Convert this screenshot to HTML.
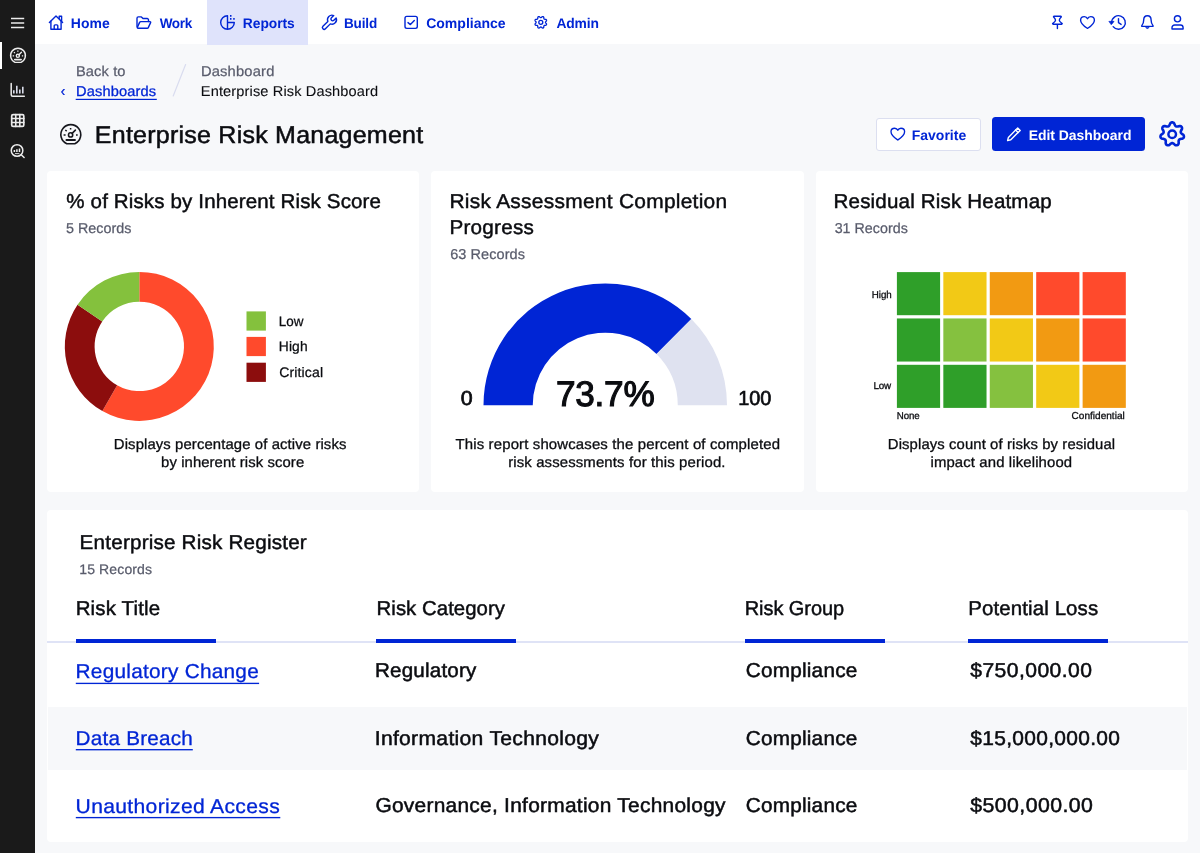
<!DOCTYPE html>
<html lang="en"><head><meta charset="utf-8"><title>Enterprise Risk Management</title>
<style>
html,body{margin:0;padding:0}
body{width:1200px;height:853px;overflow:hidden;position:relative;background:#f7f8fa;font-family:"Liberation Sans", sans-serif}
.b{position:absolute}
svg{position:absolute;overflow:visible}
</style></head><body>
<div class="b" style="left:0;top:0;width:35px;height:853px;background:#1a1a1a"></div>
<div class="b" style="left:0;top:42px;width:2px;height:27px;background:#fff"></div>
<div class="b" style="left:35px;top:0;width:1165px;height:44.3px;background:#fff"></div>
<div class="b" style="left:207px;top:0;width:101px;height:44.5px;background:#dfe3fb"></div>
<div class="b" style="left:47px;top:170.5px;width:372.4px;height:321.3px;background:#fff;border-radius:4px"></div>
<div class="b" style="left:431.2px;top:170.5px;width:372.4px;height:321.3px;background:#fff;border-radius:4px"></div>
<div class="b" style="left:815.6px;top:170.5px;width:372.4px;height:321.3px;background:#fff;border-radius:4px"></div>
<div class="b" style="left:47px;top:510.3px;width:1141.2px;height:331.7px;background:#fff;border-radius:4px"></div>
<div class="b" style="left:47.5px;top:706.6px;width:1139.5px;height:63px;background:#f7f8fa"></div>
<div class="b" style="left:47px;top:640.8px;width:1141px;height:2px;background:#dfe3f6"></div>
<div class="b" style="left:76.2px;top:638.5px;width:140px;height:4.7px;background:#0025d5"></div>
<div class="b" style="left:376.2px;top:638.5px;width:140px;height:4.7px;background:#0025d5"></div>
<div class="b" style="left:744.8px;top:638.5px;width:140px;height:4.7px;background:#0025d5"></div>
<div class="b" style="left:968.4px;top:638.5px;width:140px;height:4.7px;background:#0025d5"></div>
<div class="b" style="left:875.6px;top:117.6px;width:105.6px;height:33px;box-sizing:border-box;background:#fff;border:1px solid #dcdff0;border-radius:3px"></div>
<div class="b" style="left:991.8px;top:117.4px;width:153.6px;height:33.6px;background:#0025d5;border-radius:3.5px"></div>
<svg width="1200" height="853" viewBox="0 0 1200 853" style="left:0;top:0" fill="none" stroke-linecap="round" stroke-linejoin="round">
<path d="M185.6,64.5 L173.2,96" stroke="#d9dcef" stroke-width="1.2"/>
<g stroke="#ececec" stroke-width="1.5">
<path d="M11,18.6H24.2M11,23H24.2M11,27.4H24.2" stroke-linecap="butt"/>
</g>
<g stroke="#ececec" stroke-width="1.4"><path d="M15.01,62.37 A7.4,7.4 0 1 1 20.99,62.37Z"/><circle cx="17.85" cy="55.82" r="1.56"/><path d="M18.97,54.71 L21.42,52.25"/><path d="M14.73,59.62 H21.12" stroke-width="1.61"/><path d="M17.85,50.62 V51.73 M13.91,52.18 L14.95,53.00 M12.65,55.82 H14.13 M21.87,55.82 H23.13" stroke-width="1.33" stroke-linecap="butt"/></g>
<g stroke="#ececec" stroke-width="1.5">
<path d="M11.2,83.6V94.8a1.5,1.5 0 0 0 1.5,1.5H24.3"/>
<path d="M13.8,93.6V90.2M16.8,93.6V85.8M19.8,93.6V89.4M22.8,93.6V86.8" stroke-width="1.6" stroke-linecap="butt" stroke="#d9dcea"/>
<rect x="11.7" y="114.6" width="12.1" height="11.8" rx="1.4" stroke-width="1.7"/>
<path d="M15.75,114.6V126.4M19.8,114.6V126.4M11.7,118.5H23.8M11.7,122.5H23.8" stroke-width="1.6"/>
<circle cx="17.05" cy="150.5" r="5.8"/>
<path d="M21.2,154.7L24.1,157.5"/>
<path d="M14.4,152V150M16.9,152V149.3M19.5,152V148.5" stroke-width="1.5" stroke-linecap="butt"/>
<path d="M15,153.6H19.4" stroke-width="0.9" stroke-linecap="butt"/>
</g>
<g stroke="#0025d5" stroke-width="1.4">
<path d="M49.4,22.4 L56,16 L62.6,22.4"/>
<path d="M50.9,21.2V29.3H61.1V21.2"/>
<path d="M54.2,29.3V25.8a.9,.9 0 0 1 .9,-.9h1.8a.9,.9 0 0 1 .9,.9V29.3"/>
<path d="M59.2,18.6V16.2H61.6V21"/>
<path d="M137,26.6V18.2a1.3,1.3 0 0 1 1.3,-1.3h3.1l1.6,1.6h4.2a1.3,1.3 0 0 1 1.3,1.3V21.6"/>
<path d="M137.2,27.6l2.4,-5.2a1.3,1.3 0 0 1 1.2,-.8h9.2a.7,.7 0 0 1 .6,1l-2.2,4.8a1.3,1.3 0 0 1 -1.2,.8h-9.3a.8,.8 0 0 1 -.7,-.6z"/>
<path d="M227.5,15.7A6.8,6.8 0 1 0 234.3,22.5H227.5M227.5,15.7V29.3"/>
<path d="M230,15.1h1.5v1.6h-1.5zM230,18.1h1.5v1.6h-1.5zM233.2,18.1h1.5v1.6h-1.5z" fill="#0025d5" stroke="none"/>
<path d="M333.74,15.55 L331.43,17.86 A1.7,1.7 0 0 0 333.84,20.27 L336.15,17.96 A4.5,4.5 0 0 1 330.31,23.87 L325.41,28.77 A1.75,1.75 0 0 1 322.93,26.29 L327.83,21.39 A4.5,4.5 0 0 1 333.74,15.55Z"/>
<rect x="405" y="16.4" width="12.3" height="12" rx="1.8"/>
<path d="M408,22.6l2.4,2l3.9,-4.100"/>
<path d="M543.15,16.62 L543.39,16.76 L543.59,16.98 L543.74,17.25 L543.82,17.60 L543.80,18.07 L543.85,18.39 L543.92,18.65 L544.02,18.85 L544.16,19.01 L544.35,19.13 L544.58,19.22 L544.86,19.28 L545.24,19.30 L545.68,19.31 L545.99,19.43 L546.24,19.60 L546.42,19.82 L546.53,20.08 L546.55,20.36 L546.50,20.66 L546.37,20.96 L546.06,21.28 L545.81,21.56 L545.65,21.81 L545.55,22.03 L545.50,22.25 L545.52,22.46 L545.59,22.68 L545.72,22.91 L545.92,23.17 L546.26,23.48 L546.45,23.79 L546.54,24.09 L546.55,24.38 L546.48,24.65 L546.34,24.89 L546.12,25.09 L545.85,25.24 L545.50,25.32 L545.03,25.30 L544.71,25.35 L544.45,25.42 L544.25,25.52 L544.09,25.66 L543.97,25.85 L543.88,26.08 L543.82,26.36 L543.80,26.74 L543.79,27.18 L543.67,27.49 L543.50,27.74 L543.28,27.92 L543.02,28.03 L542.74,28.05 L542.44,28.00 L542.14,27.87 L541.82,27.56 L541.54,27.31 L541.29,27.15 L541.07,27.05 L540.85,27.00 L540.64,27.02 L540.42,27.09 L540.19,27.22 L539.93,27.42 L539.62,27.76 L539.31,27.95 L539.01,28.04 L538.72,28.05 L538.45,27.98 L538.21,27.84 L538.01,27.62 L537.86,27.35 L537.78,27.00 L537.80,26.53 L537.75,26.21 L537.68,25.95 L537.58,25.75 L537.44,25.59 L537.25,25.47 L537.02,25.38 L536.74,25.32 L536.36,25.30 L535.92,25.29 L535.61,25.17 L535.36,25.00 L535.18,24.78 L535.07,24.52 L535.05,24.24 L535.10,23.94 L535.23,23.64 L535.54,23.32 L535.79,23.04 L535.95,22.79 L536.05,22.57 L536.10,22.35 L536.08,22.14 L536.01,21.92 L535.88,21.69 L535.68,21.43 L535.34,21.12 L535.15,20.81 L535.06,20.51 L535.05,20.22 L535.12,19.95 L535.26,19.71 L535.48,19.51 L535.75,19.36 L536.10,19.28 L536.57,19.30 L536.89,19.25 L537.15,19.18 L537.35,19.08 L537.51,18.94 L537.63,18.75 L537.72,18.52 L537.78,18.24 L537.80,17.86 L537.81,17.42 L537.93,17.11 L538.10,16.86 L538.32,16.68 L538.58,16.57 L538.86,16.55 L539.16,16.60 L539.46,16.73 L539.78,17.04 L540.06,17.29 L540.31,17.45 L540.53,17.55 L540.75,17.60 L540.96,17.58 L541.18,17.51 L541.41,17.38 L541.67,17.18 L541.98,16.84 L542.29,16.65 L542.59,16.56 L542.88,16.55Z" stroke-width="1.3"/>
<circle cx="540.8" cy="22.3" r="2.0" stroke-width="1.3"/>
<path d="M1054,16.3H1060.8a.5,.5 0 0 1 .4,.8C1059.7,18.5 1059.3,19.3 1059.3,20.2C1059.3,21.500 1060.5,22.200 1062,23.300a.5,.5 0 0 1 -.3,.9H1053.1a.5,.5 0 0 1 -.3,-.9C1054.300,22.200 1055.500,21.500 1055.500,20.200C1055.500,19.300 1055.100,18.500 1053.600,17.100a.5,.5 0 0 1 .4,-.8ZM1057.4,24.200V28.600"/>
<path d="M1087.50,28.40 C1085.02,26.75 1080.60,23.92 1080.60,20.14 C1080.60,17.78 1082.26,16.60 1084.33,16.60 C1085.84,16.60 1086.95,17.43 1087.50,18.72 C1088.05,17.43 1089.16,16.60 1090.67,16.60 C1092.74,16.60 1094.40,17.78 1094.40,20.14 C1094.40,23.92 1089.98,26.75 1087.50,28.40Z"/>
<path d="M1111.71,22.14 A6.8,6.8 0 1 1 1113.14,26.69"/>
<path d="M1109.3,21.4H1114L1111.5,24.4Z" fill="#0025d5" stroke-width="0.8"/>
<path d="M1118.5,18.6V22.7L1121.1,24.4"/>
<path d="M1147.4,15.800c-2.300,0 -3.700,1.700 -3.700,4.200c0,3.200 -1,4.600 -1.900,5.600c-.3,.4 -.1,.8 .4,.8H1152.600c.5,0 .7,-.4 .4,-.8c-.9,-1 -1.900,-2.400 -1.900,-5.600c0,-2.500 -1.400,-4.200 -3.700,-4.200Z"/>
<path d="M1145.900,27.500a1.600,1.600 0 0 0 3,0Z" fill="#0025d5" stroke-width="0.8"/>
<circle cx="1177.5" cy="18.800" r="3.100"/>
<path d="M1172,29V27.700a2.700,2.700 0 0 1 2.700,-2.700h5.700a2.700,2.700 0 0 1 2.700,2.700V29Z"/>
</g>
<g stroke="#16171d" stroke-width="1.6"><path d="M66.78,143.70 A9.95,9.95 0 1 1 74.82,143.70Z"/><circle cx="70.60" cy="134.90" r="2.10"/><path d="M72.10,133.40 L75.40,130.10"/><path d="M66.40,140.00 H75.00" stroke-width="1.84"/><path d="M70.60,127.90 V129.40 M65.30,130.00 L66.70,131.10 M63.60,134.90 H65.60 M76.00,134.90 H77.70" stroke-width="1.52" stroke-linecap="butt"/></g>
<path d="M897.80,140.00 C895.35,138.35 891.00,135.52 891.00,131.74 C891.00,129.38 892.63,128.20 894.67,128.20 C896.17,128.20 897.26,129.03 897.80,130.32 C898.34,129.03 899.43,128.20 900.93,128.20 C902.97,128.20 904.60,129.38 904.60,131.74 C904.60,135.52 900.25,138.35 897.80,140.00Z" stroke="#0025d5" stroke-width="1.35"/>
<g stroke="#fff" stroke-width="1.4"><path d="M1017.7,127.9l2.500,2.500l-9.400,9.400l-3.200,.8l.8,-3.200z"/><path d="M1015.600,130l2.500,2.500"/></g>
<path d="M1172.20,122.30 L1172.74,122.37 L1173.25,122.58 L1173.74,122.93 L1174.18,123.41 L1174.51,124.16 L1174.79,124.91 L1175.08,125.43 L1175.37,125.84 L1175.68,126.15 L1176.02,126.37 L1176.40,126.50 L1176.83,126.54 L1177.34,126.52 L1177.92,126.42 L1178.68,126.17 L1179.48,125.97 L1180.13,126.01 L1180.70,126.17 L1181.19,126.44 L1181.58,126.82 L1181.86,127.28 L1182.02,127.82 L1182.05,128.41 L1181.94,129.06 L1181.57,129.79 L1181.15,130.47 L1180.93,131.02 L1180.79,131.51 L1180.74,131.94 L1180.78,132.34 L1180.92,132.72 L1181.15,133.09 L1181.49,133.46 L1181.93,133.86 L1182.60,134.30 L1183.25,134.80 L1183.63,135.33 L1183.86,135.88 L1183.95,136.43 L1183.90,136.97 L1183.71,137.48 L1183.39,137.94 L1182.94,138.33 L1182.37,138.65 L1181.57,138.81 L1180.77,138.91 L1180.21,139.08 L1179.74,139.28 L1179.37,139.51 L1179.08,139.79 L1178.87,140.13 L1178.73,140.54 L1178.64,141.04 L1178.61,141.63 L1178.68,142.43 L1178.70,143.25 L1178.52,143.88 L1178.23,144.40 L1177.86,144.82 L1177.41,145.11 L1176.89,145.28 L1176.33,145.31 L1175.75,145.21 L1175.14,144.96 L1174.51,144.44 L1173.94,143.88 L1173.45,143.54 L1173.01,143.30 L1172.60,143.15 L1172.20,143.10 L1171.80,143.15 L1171.39,143.30 L1170.95,143.54 L1170.46,143.88 L1169.89,144.44 L1169.26,144.96 L1168.65,145.21 L1168.07,145.31 L1167.51,145.28 L1166.99,145.11 L1166.54,144.82 L1166.17,144.40 L1165.88,143.88 L1165.70,143.25 L1165.72,142.43 L1165.79,141.63 L1165.76,141.04 L1165.67,140.54 L1165.53,140.13 L1165.32,139.79 L1165.03,139.51 L1164.66,139.28 L1164.19,139.08 L1163.63,138.91 L1162.83,138.81 L1162.03,138.65 L1161.46,138.33 L1161.01,137.94 L1160.69,137.48 L1160.50,136.97 L1160.45,136.43 L1160.54,135.88 L1160.77,135.33 L1161.15,134.80 L1161.80,134.30 L1162.47,133.86 L1162.91,133.46 L1163.25,133.09 L1163.48,132.72 L1163.62,132.34 L1163.66,131.94 L1163.61,131.51 L1163.47,131.02 L1163.25,130.47 L1162.83,129.79 L1162.46,129.06 L1162.35,128.41 L1162.38,127.82 L1162.54,127.28 L1162.82,126.82 L1163.21,126.44 L1163.70,126.17 L1164.27,126.01 L1164.92,125.97 L1165.72,126.17 L1166.48,126.42 L1167.06,126.52 L1167.57,126.54 L1168.00,126.50 L1168.38,126.37 L1168.72,126.15 L1169.03,125.84 L1169.32,125.43 L1169.61,124.91 L1169.89,124.16 L1170.22,123.41 L1170.66,122.93 L1171.15,122.58 L1171.66,122.37Z" stroke="#0025d5" stroke-width="2.6"/>
<circle cx="1172.2" cy="134.3" r="3.8" stroke="#0025d5" stroke-width="2.5"/>
<path d="M139.30,271.90 A74.5,74.5 0 1 1 102.39,411.11 L117.15,385.23 A44.7,44.7 0 1 0 139.30,301.70Z" fill="#ff4a2c" stroke="none"/>
<path d="M102.39,411.11 A74.5,74.5 0 0 1 77.54,304.74 L102.24,321.40 A44.7,44.7 0 0 0 117.15,385.23Z" fill="#8c0d0d" stroke="none"/>
<path d="M77.54,304.74 A74.5,74.5 0 0 1 139.30,271.90 L139.30,301.70 A44.7,44.7 0 0 0 102.24,321.40Z" fill="#84c13d" stroke="none"/>
<rect x="246.5" y="311.4" width="19.4" height="19.2" fill="#84c13d" stroke="none"/>
<rect x="246.5" y="336.9" width="19.4" height="19.2" fill="#ff4a2c" stroke="none"/>
<rect x="246.5" y="362.7" width="19.4" height="19.2" fill="#8c0d0d" stroke="none"/>
<path d="M483.50,405.20 A121.75,121.75 0 0 1 691.34,319.11 L656.52,353.93 A72.5,72.5 0 0 0 532.75,405.20Z" fill="#0025d5" stroke="none"/>
<path d="M691.34,319.11 A121.75,121.75 0 0 1 727.00,405.20 L677.75,405.20 A72.5,72.5 0 0 0 656.52,353.93Z" fill="#dfe2f0" stroke="none"/>
<rect x="896.90" y="272.10" width="43.2" height="43.1" fill="#2f9f29" stroke="none"/>
<rect x="943.33" y="272.10" width="43.2" height="43.1" fill="#f2c916" stroke="none"/>
<rect x="989.76" y="272.10" width="43.2" height="43.1" fill="#f29a12" stroke="none"/>
<rect x="1036.19" y="272.10" width="43.2" height="43.1" fill="#ff4a2c" stroke="none"/>
<rect x="1082.62" y="272.10" width="43.2" height="43.1" fill="#ff4a2c" stroke="none"/>
<rect x="896.90" y="318.45" width="43.2" height="43.1" fill="#2f9f29" stroke="none"/>
<rect x="943.33" y="318.45" width="43.2" height="43.1" fill="#85c13f" stroke="none"/>
<rect x="989.76" y="318.45" width="43.2" height="43.1" fill="#f2c916" stroke="none"/>
<rect x="1036.19" y="318.45" width="43.2" height="43.1" fill="#f29a12" stroke="none"/>
<rect x="1082.62" y="318.45" width="43.2" height="43.1" fill="#ff4a2c" stroke="none"/>
<rect x="896.90" y="364.80" width="43.2" height="43.1" fill="#2f9f29" stroke="none"/>
<rect x="943.33" y="364.80" width="43.2" height="43.1" fill="#2f9f29" stroke="none"/>
<rect x="989.76" y="364.80" width="43.2" height="43.1" fill="#85c13f" stroke="none"/>
<rect x="1036.19" y="364.80" width="43.2" height="43.1" fill="#f2c916" stroke="none"/>
<rect x="1082.62" y="364.80" width="43.2" height="43.1" fill="#f29a12" stroke="none"/>
</svg>
<div id="txt" style="position:absolute;left:0;top:0;width:1200px;height:853px;will-change:transform">
<svg width="1200" height="853" viewBox="0 0 1200 853" style="position:absolute;left:0;top:0;font-family:'Liberation Sans',sans-serif;white-space:pre" text-rendering="geometricPrecision">
<text transform="translate(70.83,28.00) scale(0.9965,1)" font-size="14" fill="#0025d5" font-weight="700" letter-spacing="0.080">Hom<tspan letter-spacing="0">e</tspan></text>
<text transform="translate(159.63,28.00) scale(0.9673,1)" font-size="14" fill="#0025d5" font-weight="700" letter-spacing="-0.312">Wor<tspan letter-spacing="0">k</tspan></text>
<text transform="translate(242.85,28.00) scale(0.9863,1)" font-size="14" fill="#0025d5" font-weight="700" letter-spacing="-0.051">Report<tspan letter-spacing="0">s</tspan></text>
<text transform="translate(343.88,28.00) scale(0.9669,1)" font-size="14" fill="#0025d5" font-weight="700" letter-spacing="-0.133">Buil<tspan letter-spacing="0">d</tspan></text>
<text transform="translate(426.17,28.00) scale(1.0021,1)" font-size="14" fill="#0025d5" font-weight="700" letter-spacing="-0.007">Complianc<tspan letter-spacing="0">e</tspan></text>
<text transform="translate(556.40,28.00) scale(0.9881,1)" font-size="14" fill="#0025d5" font-weight="700" letter-spacing="-0.140">Admi<tspan letter-spacing="0">n</tspan></text>
<text transform="translate(75.91,76.00) scale(1.0320,1)" font-size="14.2" fill="#595c6c" letter-spacing="0.118" stroke="#595c6c" stroke-width="0.25">Back t<tspan letter-spacing="0">o</tspan></text>
<rect x="75.70" y="98.80" width="81.10" height="1.2" fill="#0025d5"/>
<text transform="translate(76.04,96.00) scale(1.0281,1)" font-size="14.2" fill="#0025d5" letter-spacing="0.146" stroke="#0025d5" stroke-width="0.3">Dashboard<tspan letter-spacing="0">s</tspan></text>
<text transform="translate(60.86,96.00) scale(0.8938,1)" font-size="15" fill="#0025d5" stroke="#0025d5" stroke-width="0.3">‹</text>
<text transform="translate(200.91,76.00) scale(1.0361,1)" font-size="14.2" fill="#595c6c" letter-spacing="0.180" stroke="#595c6c" stroke-width="0.25">Dashboar<tspan letter-spacing="0">d</tspan></text>
<text transform="translate(200.78,96.00) scale(1.0278,1)" font-size="14.2" fill="#0b0c10" letter-spacing="0.127" stroke="#0b0c10" stroke-width="0.1">Enterprise Risk Dashboar<tspan letter-spacing="0">d</tspan></text>
<text transform="translate(94.84,143.00) scale(1.0293,1)" font-size="24.3" fill="#0b0c10" letter-spacing="0.227" stroke="#0b0c10" stroke-width="0.5">Enterprise Risk Managemen<tspan letter-spacing="0">t</tspan></text>
<text transform="translate(911.74,140.00) scale(0.9992,1)" font-size="14" fill="#0025d5" font-weight="700" letter-spacing="0.001">Favorit<tspan letter-spacing="0">e</tspan></text>
<text transform="translate(1028.67,140.00) scale(0.9967,1)" font-size="14" fill="#fff" font-weight="700" letter-spacing="-0.023">Edit Dashboar<tspan letter-spacing="0">d</tspan></text>
<text transform="translate(66.36,208.00) scale(1.0212,1)" font-size="20.1" fill="#0b0c10" letter-spacing="0.136" stroke="#0b0c10" stroke-width="0.45">% of Risks by Inherent Risk Scor<tspan letter-spacing="0">e</tspan></text>
<text transform="translate(65.88,233.00) scale(1.0030,1)" font-size="14.3" fill="#595c6c" letter-spacing="0.028" stroke="#595c6c" stroke-width="0.25">5 Record<tspan letter-spacing="0">s</tspan></text>
<text transform="translate(449.43,208.00) scale(1.0410,1)" font-size="20.1" fill="#0b0c10" letter-spacing="0.264" stroke="#0b0c10" stroke-width="0.45">Risk Assessment Completio<tspan letter-spacing="0">n</tspan></text>
<text transform="translate(449.47,234.00) scale(1.0294,1)" font-size="20.1" fill="#0b0c10" letter-spacing="0.220" stroke="#0b0c10" stroke-width="0.45">Progres<tspan letter-spacing="0">s</tspan></text>
<text transform="translate(450.20,259.00) scale(1.0144,1)" font-size="14.3" fill="#595c6c" letter-spacing="0.069" stroke="#595c6c" stroke-width="0.25">63 Record<tspan letter-spacing="0">s</tspan></text>
<text transform="translate(833.51,208.00) scale(1.0238,1)" font-size="20.1" fill="#0b0c10" letter-spacing="0.159" stroke="#0b0c10" stroke-width="0.45">Residual Risk Heatma<tspan letter-spacing="0">p</tspan></text>
<text transform="translate(834.64,233.00) scale(0.9976,1)" font-size="14.3" fill="#595c6c" letter-spacing="0.020" stroke="#595c6c" stroke-width="0.25">31 Record<tspan letter-spacing="0">s</tspan></text>
<text transform="translate(278.82,326.00) scale(0.9772,1)" font-size="13.8" fill="#0b0c10" letter-spacing="-0.024" stroke="#0b0c10" stroke-width="0.25">Lo<tspan letter-spacing="0">w</tspan></text>
<text transform="translate(278.78,351.00) scale(1.0022,1)" font-size="13.8" fill="#0b0c10" letter-spacing="0.130" stroke="#0b0c10" stroke-width="0.25">Hig<tspan letter-spacing="0">h</tspan></text>
<text transform="translate(279.25,377.00) scale(1.0208,1)" font-size="13.8" fill="#0b0c10" letter-spacing="0.107" stroke="#0b0c10" stroke-width="0.25">Critica<tspan letter-spacing="0">l</tspan></text>
<text transform="translate(113.85,449.00) scale(1.0255,1)" font-size="14.5" fill="#0b0c10" letter-spacing="0.103" stroke="#0b0c10" stroke-width="0.3">Displays percentage of active risk<tspan letter-spacing="0">s</tspan></text>
<text transform="translate(161.05,467.00) scale(1.0239,1)" font-size="14.5" fill="#0b0c10" letter-spacing="0.092" stroke="#0b0c10" stroke-width="0.3">by inherent risk scor<tspan letter-spacing="0">e</tspan></text>
<text transform="translate(455.51,449.00) scale(1.0304,1)" font-size="14.5" fill="#0b0c10" letter-spacing="0.139" stroke="#0b0c10" stroke-width="0.3">This report showcases the percent of complete<tspan letter-spacing="0">d</tspan></text>
<text transform="translate(508.13,467.00) scale(1.0297,1)" font-size="14.5" fill="#0b0c10" letter-spacing="0.124" stroke="#0b0c10" stroke-width="0.3">risk assessments for this period<tspan letter-spacing="0">.</tspan></text>
<text transform="translate(887.86,449.00) scale(1.0237,1)" font-size="14.5" fill="#0b0c10" letter-spacing="0.105" stroke="#0b0c10" stroke-width="0.3">Displays count of risks by residua<tspan letter-spacing="0">l</tspan></text>
<text transform="translate(930.44,467.00) scale(1.0270,1)" font-size="14.5" fill="#0b0c10" letter-spacing="0.127" stroke="#0b0c10" stroke-width="0.3">impact and likelihoo<tspan letter-spacing="0">d</tspan></text>
<text transform="translate(555.91,406.00) scale(0.9902,1)" font-size="35.5" fill="#0b0c10" letter-spacing="-0.220" stroke="#0b0c10" stroke-width="1.15">73.7<tspan letter-spacing="0">%</tspan></text>
<text transform="translate(460.71,405.00) scale(1.0617,1)" font-size="20.2" fill="#0b0c10" stroke="#0b0c10" stroke-width="0.7">0</text>
<text transform="translate(738.33,405.00) scale(0.9845,1)" font-size="20.2" fill="#0b0c10" letter-spacing="-0.138" stroke="#0b0c10" stroke-width="0.7">10<tspan letter-spacing="0">0</tspan></text>
<text transform="translate(871.85,298.00) scale(0.9780,1)" font-size="10" fill="#0b0c10" letter-spacing="-0.086" stroke="#0b0c10" stroke-width="0.3">Hig<tspan letter-spacing="0">h</tspan></text>
<text transform="translate(873.51,389.00) scale(0.9821,1)" font-size="10" fill="#0b0c10" letter-spacing="-0.187" stroke="#0b0c10" stroke-width="0.3">Lo<tspan letter-spacing="0">w</tspan></text>
<text transform="translate(896.79,419.00) scale(0.9676,1)" font-size="10" fill="#0b0c10" letter-spacing="-0.059" stroke="#0b0c10" stroke-width="0.3">Non<tspan letter-spacing="0">e</tspan></text>
<text transform="translate(1071.61,419.00) scale(1.0042,1)" font-size="10" fill="#0b0c10" letter-spacing="0.006" stroke="#0b0c10" stroke-width="0.3">Confidentia<tspan letter-spacing="0">l</tspan></text>
<text transform="translate(79.62,549.00) scale(1.0287,1)" font-size="20.1" fill="#0b0c10" letter-spacing="0.179" stroke="#0b0c10" stroke-width="0.45">Enterprise Risk Registe<tspan letter-spacing="0">r</tspan></text>
<text transform="translate(79.28,574.00) scale(1.0178,1)" font-size="13.8" fill="#595c6c" letter-spacing="0.102" stroke="#595c6c" stroke-width="0.25">15 Record<tspan letter-spacing="0">s</tspan></text>
<text transform="translate(75.64,615.00) scale(1.0186,1)" font-size="20.1" fill="#0b0c10" letter-spacing="0.159" stroke="#0b0c10" stroke-width="0.45">Risk Titl<tspan letter-spacing="0">e</tspan></text>
<text transform="translate(376.57,615.00) scale(1.0115,1)" font-size="20.1" fill="#0b0c10" letter-spacing="0.060" stroke="#0b0c10" stroke-width="0.45">Risk Categor<tspan letter-spacing="0">y</tspan></text>
<text transform="translate(744.70,615.00) scale(0.9938,1)" font-size="20.1" fill="#0b0c10" letter-spacing="-0.048" stroke="#0b0c10" stroke-width="0.45">Risk Grou<tspan letter-spacing="0">p</tspan></text>
<text transform="translate(968.32,615.00) scale(1.0186,1)" font-size="20.1" fill="#0b0c10" letter-spacing="0.095" stroke="#0b0c10" stroke-width="0.45">Potential Los<tspan letter-spacing="0">s</tspan></text>
<rect x="75.80" y="682.73" width="183.30" height="1.35" fill="#0025d5"/>
<text transform="translate(75.56,678.00) scale(1.0343,1)" font-size="20.1" fill="#0025d5" letter-spacing="0.248" stroke="#0025d5" stroke-width="0.3">Regulatory Chang<tspan letter-spacing="0">e</tspan></text>
<text transform="translate(374.91,677.00) scale(1.0241,1)" font-size="20.1" fill="#0b0c10" letter-spacing="0.210" stroke="#0b0c10" stroke-width="0.5">Regulator<tspan letter-spacing="0">y</tspan></text>
<text transform="translate(745.69,677.00) scale(1.0316,1)" font-size="20.1" fill="#0b0c10" letter-spacing="0.229" stroke="#0b0c10" stroke-width="0.5">Complianc<tspan letter-spacing="0">e</tspan></text>
<text transform="translate(970.25,677.00) scale(1.0511,1)" font-size="20.1" fill="#0b0c10" letter-spacing="0.402" stroke="#0b0c10" stroke-width="0.5">$750,000.0<tspan letter-spacing="0">0</tspan></text>
<rect x="75.80" y="749.03" width="117.00" height="1.35" fill="#0025d5"/>
<text transform="translate(75.56,745.00) scale(1.0293,1)" font-size="20.1" fill="#0025d5" letter-spacing="0.222" stroke="#0025d5" stroke-width="0.3">Data Breac<tspan letter-spacing="0">h</tspan></text>
<text transform="translate(374.71,745.00) scale(1.0499,1)" font-size="20.1" fill="#0b0c10" letter-spacing="0.292" stroke="#0b0c10" stroke-width="0.5">Information Technolog<tspan letter-spacing="0">y</tspan></text>
<text transform="translate(745.69,745.00) scale(1.0316,1)" font-size="20.1" fill="#0b0c10" letter-spacing="0.229" stroke="#0b0c10" stroke-width="0.5">Complianc<tspan letter-spacing="0">e</tspan></text>
<text transform="translate(970.25,745.00) scale(1.0430,1)" font-size="20.1" fill="#0b0c10" letter-spacing="0.298" stroke="#0b0c10" stroke-width="0.5">$15,000,000.0<tspan letter-spacing="0">0</tspan></text>
<rect x="75.80" y="816.93" width="204.50" height="1.35" fill="#0025d5"/>
<text transform="translate(75.60,813.00) scale(1.0496,1)" font-size="20.1" fill="#0025d5" letter-spacing="0.316" stroke="#0025d5" stroke-width="0.3">Unauthorized Acces<tspan letter-spacing="0">s</tspan></text>
<text transform="translate(375.41,812.00) scale(1.0405,1)" font-size="20.1" fill="#0b0c10" letter-spacing="0.255" stroke="#0b0c10" stroke-width="0.5">Governance, Information Technolog<tspan letter-spacing="0">y</tspan></text>
<text transform="translate(745.69,812.00) scale(1.0316,1)" font-size="20.1" fill="#0b0c10" letter-spacing="0.229" stroke="#0b0c10" stroke-width="0.5">Complianc<tspan letter-spacing="0">e</tspan></text>
<text transform="translate(970.25,812.00) scale(1.0592,1)" font-size="20.1" fill="#0b0c10" letter-spacing="0.409" stroke="#0b0c10" stroke-width="0.5">$500,000.0<tspan letter-spacing="0">0</tspan></text>
</svg>
</div>
</body></html>
